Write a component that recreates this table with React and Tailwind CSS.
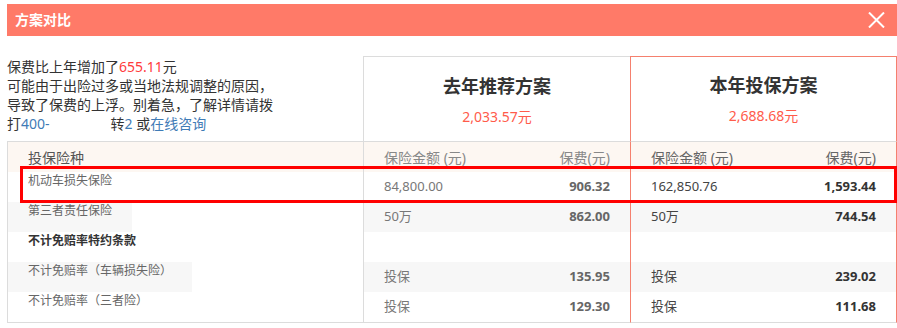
import React from 'react';

const rows = [
  { label: '机动车损失保险', a: '84,800.00', b: '906.32', c: '162,850.76', d: '1,593.44' },
  { label: '第三者责任保险', a: '50万', b: '862.00', c: '50万', d: '744.54', gray: true },
  { label: '不计免赔率特约条款', bold: true },
  { label: '不计免赔率（车辆损失险）', a: '投保', b: '135.95', c: '投保', d: '239.02', gray: true },
  { label: '不计免赔率（三者险）', a: '投保', b: '129.30', c: '投保', d: '111.68' },
];

export default function App() {
  return (
    <div className="relative w-[897px] h-[328px] bg-white overflow-hidden font-['Noto_Sans','Noto_Sans_CJK_SC',sans-serif]">
      {/* Title bar */}
      <div className="ml-[7px] mt-[4px] h-[32px] bg-[#ff7a68] flex items-center justify-between pl-[8px] pr-[12px]">
        <span className="text-white font-bold text-[14px] leading-[20px]">方案对比</span>
        <svg width="17" height="16" viewBox="0 0 17 16" className="text-white">
          <path d="M1 0.5 L16 15.5 M16 0.5 L1 15.5" stroke="currentColor" strokeWidth="2" />
        </svg>
      </div>

      <div className="ml-[7px] mt-[20px] grid grid-cols-[356px_267px_267px]">
        {/* Summary */}
        <div className="h-[85px] pt-[1px] text-[14px] leading-[19px] text-[#333] whitespace-nowrap">
          <div>保费比上年增加了<span className="text-[#ff3b3b]">655.11</span>元</div>
          <div>可能由于出险过多或当地法规调整的原因，</div>
          <div>导致了保费的上浮。别着急，了解详情请拨</div>
          <div>
            打<span className="text-[#3f7bb6]">400-</span>
            <span className="inline-block w-[61px]"></span>
            转<span className="text-[#3f7bb6]">2</span> 或<span className="text-[#3f7bb6]">在线咨询</span>
          </div>
        </div>
        <div className="h-[85px] border-l border-t border-[#dcdcdc] flex flex-col items-center pt-[17px]">
          <div className="text-[18px] leading-[24px] font-bold text-[#333]">去年推荐方案</div>
          <div className="mt-[9px] text-[14px] leading-[20px] text-[#ff5b4b]">2,033.57元</div>
        </div>
        <div className="h-[85px] border-x border-t border-[#f5806e] flex flex-col items-center pt-[16px]">
          <div className="text-[18px] leading-[24px] font-bold text-[#333]">本年投保方案</div>
          <div className="mt-[9px] text-[14px] leading-[20px] text-[#ff5b4b]">2,688.68元</div>
        </div>

        {/* Table head */}
        <div className="h-[31px] border-t border-l border-[#dcdcdc] bg-[#fdf7f2] flex items-center pl-[20px] text-[14px] text-[#555]">
          投保险种
        </div>
        <div className="h-[31px] border-t border-l border-[#dcdcdc] bg-[#fdf7f2] flex items-center justify-between px-[20px] text-[14px] text-[#888]">
          <span>保险金额 (元)</span>
          <span>保费(元)</span>
        </div>
        <div className="h-[31px] border-t border-t-[#dcdcdc] border-x border-x-[#f5806e] bg-[#fdf7f2] flex items-center justify-between px-[20px] text-[14px] text-[#666]">
          <span>保险金额 (元)</span>
          <span>保费(元)</span>
        </div>

        {rows.map((r, i) => {
          const last = i === rows.length - 1;
          return (
            <React.Fragment key={r.label}>
              <div className={`flex items-start border-l border-[#dcdcdc] ${last ? 'h-[31px] border-b' : 'h-[30px]'}`}>
                <span
                  className={`block h-[30px] px-[20px] pt-[1px] text-[12px] leading-[16px] ${r.gray ? 'bg-[#f7f7f7]' : ''} ${r.bold ? 'font-bold text-[#333]' : 'text-[#666]'}`}
                >
                  {r.label}
                </span>
              </div>
              <div
                className={`border-l border-[#dcdcdc] flex items-center justify-between px-[20px] text-[13px] text-[#777] ${r.gray ? 'bg-[#f7f7f7]' : ''} ${last ? 'h-[31px] border-b' : 'h-[30px]'}`}
              >
                <span>{r.a}</span>
                <span className="font-bold text-[#666]">{r.b}</span>
              </div>
              <div
                className={`border-x border-[#f5806e] flex items-center justify-between px-[20px] text-[13px] text-[#444] ${r.gray ? 'bg-[#f7f7f7]' : ''} ${last ? 'h-[31px] border-b border-b-[#dcdcdc]' : 'h-[30px]'}`}
              >
                <span>{r.c}</span>
                <span className="font-bold text-[#333]">{r.d}</span>
              </div>
            </React.Fragment>
          );
        })}
      </div>

      {/* highlight annotation */}
      <div className="absolute left-[20px] top-[166px] w-[877px] h-[37px] border-[3px] border-[#ff0000] pointer-events-none"></div>
    </div>
  );
}
